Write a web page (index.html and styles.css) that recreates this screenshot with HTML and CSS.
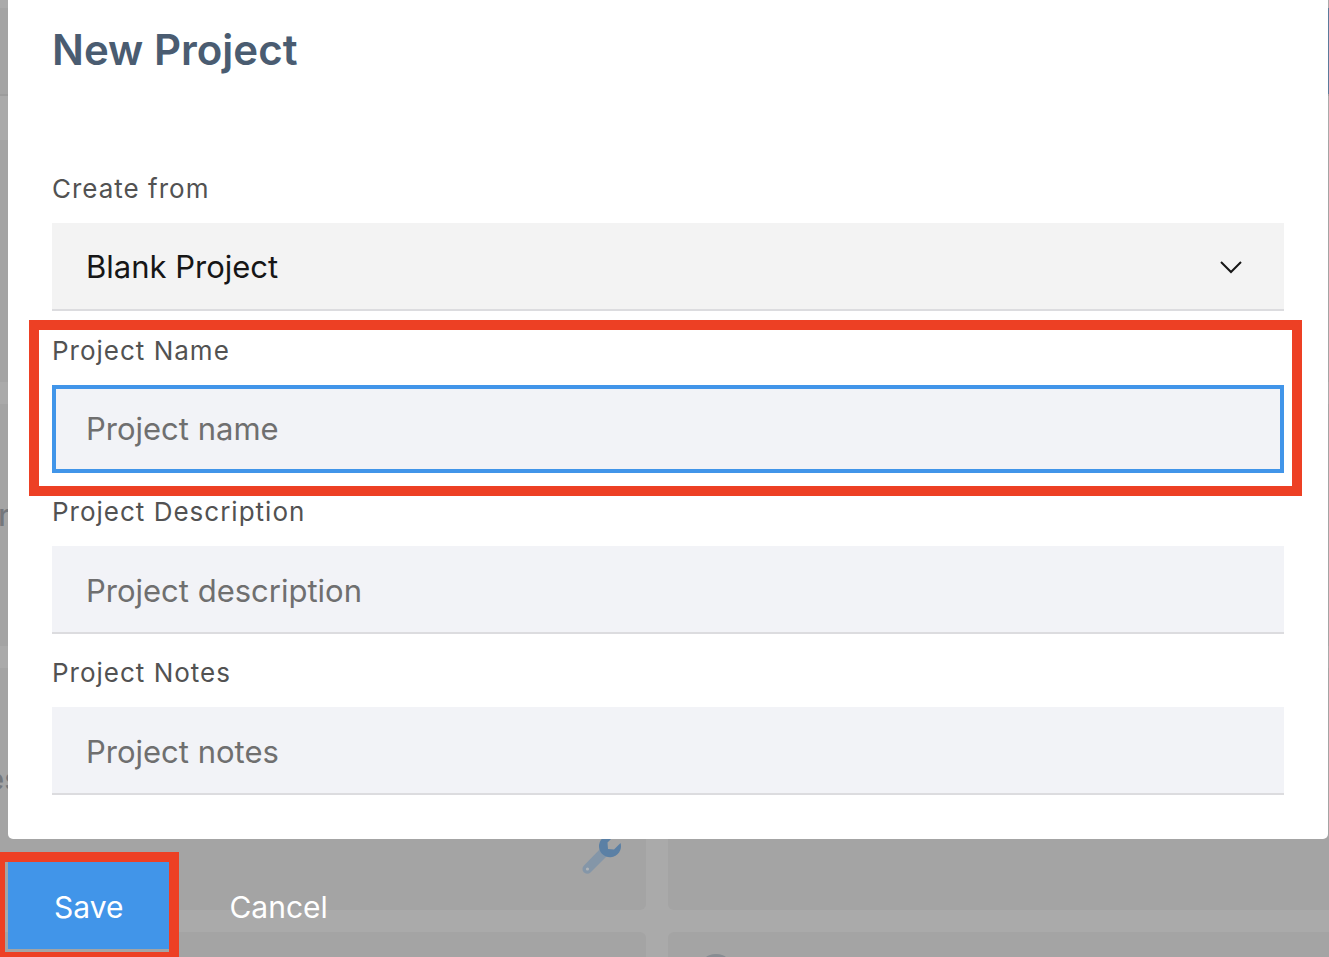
FILE: index.html
```html
<!DOCTYPE html>
<html lang="en">
<head>
<meta charset="utf-8">
<meta name="viewport" content="width=device-width, initial-scale=1">
<title>New Project</title>
<link rel="stylesheet" href="styles.css">
</head>
<body>
<div class="page" aria-hidden="true">
  <div class="toolbar"><div class="toolbar-action"></div></div>
  <div class="cards">
    <div class="card"></div><div class="card"></div>
    <div class="card card-inset"><p class="card-name">r</p></div><div class="card"></div>
    <div class="card card-tools">
      <p class="card-name">es</p>
      <svg class="wrench" viewBox="0 0 40 40">
        <path d="M20 14 3 31.500a4.500 4.500 0 0 0 6.500 7L27 21z" fill="#8496a8"/>
        <path d="M33 2 26.500 8.500l.5 6.500 6 .5 6.500-6.500A11 11 0 1 1 33 2z" fill="#5b80a5"/>
        <circle cx="6.500" cy="35" r="1.600" fill="#b0b4b8"/>
      </svg>
    </div><div class="card"></div>
    <div class="card"></div><div class="card card-avatar"><div class="avatar"></div></div>
  </div>
</div>
<form class="dialog" role="dialog" aria-labelledby="dialog-title">
  <div class="panel">
    <h1 class="title" id="dialog-title">New Project</h1>
    <div class="field field-source">
      <label class="label" for="source">Create from</label>
      <div class="select-wrap">
        <select class="control select" id="source"><option>Blank Project</option></select>
        <svg class="chevron" viewBox="0 0 24 14" fill="none" stroke="#161616" stroke-width="2"><path d="M2 2l10 10L22 2"/></svg>
      </div>
    </div>
    <div class="field field-marked">
      <label class="label" for="name">Project Name</label>
      <input class="control control-active" id="name" type="text" placeholder="Project name">
    </div>
    <div class="field">
      <label class="label" for="description">Project Description</label>
      <input class="control" id="description" type="text" placeholder="Project description">
    </div>
    <div class="field">
      <label class="label" for="notes">Project Notes</label>
      <input class="control" id="notes" type="text" placeholder="Project notes">
    </div>
  </div>
  <div class="actions">
    <div class="save-marked"><button class="button button-save" type="submit">Save</button></div>
    <button class="button button-cancel" type="button">Cancel</button>
  </div>
</form>
</body>
</html>
```

FILE: styles.css
```css
* { box-sizing: border-box; }

body {
  position: relative;
  margin: 0;
  min-height: 100vh;
  overflow: hidden;
  background: #aaa;
  font-family: Inter, "Liberation Sans", sans-serif;
}

/* Dimmed page behind the dialog */
.page {
  position: absolute;
  inset: 0;
  overflow: hidden;
}
.toolbar {
  display: flex;
  justify-content: flex-end;
  height: 96px;
  background: #a4a4a4;
  border-top: 8px solid #aaa;
  border-bottom: 2px solid #9c9c9c;
}
.toolbar-action { width: 2px; background: #5b7b9b; }
.cards {
  display: grid;
  grid-template-columns: 1fr 1fr;
  grid-auto-rows: 242px;
  gap: 22px;
  margin: 44px -8px 0 -24px;
}
.card {
  padding: 94px 10px 0;
  border-radius: 6px;
  background: #a4a4a4;
}
.card-inset { padding-left: 22px; }
.card-name {
  margin: 0;
  color: #74777c;
  font-size: 31px;
  line-height: 34px;
  font-weight: 500;
}
.card-tools { position: relative; }
.wrench {
  position: absolute;
  right: 25px;
  bottom: 36px;
  width: 40px;
  height: 40px;
}
.card-avatar { padding: 22px 30px; }
.avatar {
  width: 36px;
  height: 36px;
  border-radius: 50%;
  background: #878c92;
}

.dialog { position: relative; }
.panel {
  display: flex;
  flex-direction: column;
  gap: 22px;
  margin: 0 1px 0 8px;
  padding: 22px 44px 44px;
  border-radius: 0 0 5px 5px;
  background: #fff;
}
.title {
  margin: 0 0 72px;
  color: #4a5c71;
  font-size: 42px;
  line-height: 56px;
  font-weight: 600;
}
.field {
  position: relative;
  display: flex;
  flex-direction: column;
  gap: 17px;
}
.field-source { margin-bottom: 1px; }
.label {
  color: #525252;
  font-size: 26px;
  line-height: 34px;
  letter-spacing: 1px;
}
.control {
  width: 100%;
  height: 88px;
  margin: 0;
  padding: 2px 34px 0;
  border: 0;
  border-bottom: 2px solid #dcdcdf;
  border-radius: 0;
  outline: 0;
  background: #f2f3f7;
  color: #161616;
  font-family: inherit;
  font-size: 31px;
}
.control::placeholder { color: #6f6f6f; opacity: 1; }
.control-active {
  padding: 0 30px 2px;
  border: 4px solid #4195e9;
}
.select-wrap { position: relative; display: flex; }
.select { appearance: none; padding-top: 0; background: #f3f3f3; }
.chevron {
  position: absolute;
  top: 37px;
  right: 41px;
  width: 24px;
  height: 14px;
  pointer-events: none;
}

/* Red call-out frames */
.field-marked::after,
.save-marked::after {
  content: "";
  position: absolute;
  border: 10px solid #ed4024;
  pointer-events: none;
}
.field-marked::after { inset: -14px -18px -23px -23px; }
.save-marked::after { inset: -10px -10px -13px -13px; }

.actions { display: flex; margin: 23px 0 0 8px; }
.save-marked { position: relative; display: flex; }
.button {
  height: 87px;
  border: 0;
  color: #fff;
  font-family: inherit;
  font-size: 30px;
}
.button-save { padding: 2px 46px 0; background: #4195e9; }
.button-cancel { padding: 2px 60px 0; background: transparent; }
```
